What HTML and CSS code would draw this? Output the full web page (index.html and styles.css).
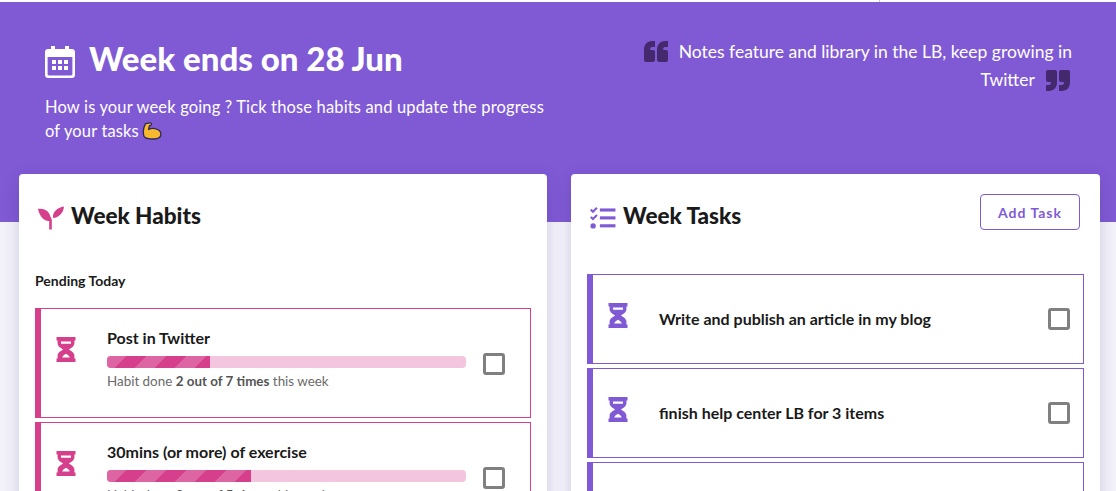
FILE: index.html
```html
<!DOCTYPE html>
<html lang="en">
<head>
<meta charset="utf-8">
<title>Week</title>
<link rel="stylesheet" href="styles.css">
</head>
<body>
<svg class="sprite" width="0" height="0" aria-hidden="true">
  <symbol id="hourglass" viewBox="0 0 20 25">
    <path fill-rule="evenodd" d="M0.5 0H19.5V3.4H18.4V6.5C18.4 9.2 15.2 11 12.8 12.5C15.2 14 18.4 15.8 18.4 18.5V21.6H19.5V25H0.5V21.6H1.6V18.5C1.6 15.8 4.8 14 7.2 12.5C4.8 11 1.6 9.2 1.6 6.5V3.4H0.5ZM5 4.6V6.8H15V4.6ZM10 16.8C8.4 17.8 6.8 18.8 6.2 20.4H13.8C13.2 18.8 11.6 17.8 10 16.8Z"/>
  </symbol>
</svg>
<div class="page">
  <div class="topline"></div>
  <header class="hero">
    <div class="hero-left">
      <h1 class="hero-title">
        <svg class="cal" viewBox="0 0 30 32" aria-hidden="true">
          <path fill="#fff" fill-rule="evenodd" d="M6 0H10V3H20V0H24V3H27C28.7 3 30 4.3 30 6V29C30 30.7 28.7 32 27 32H3C1.3 32 0 30.7 0 29V6C0 4.3 1.3 3 3 3H6ZM2.6 11V28C2.6 28.8 3.2 29.4 4 29.4H26C26.8 29.4 27.4 28.8 27.4 28V11ZM7 14H11V18H7ZM13 14H17V18H13ZM19 14H23V18H19ZM7 20H11V24H7ZM13 20H17V24H13ZM19 20H23V24H19Z"/>
        </svg>
        <span>Week ends on 28 Jun</span>
      </h1>
      <p class="hero-sub">How is your week going ? Tick those habits and update the progress of your tasks
        <svg class="muscle" viewBox="0 0 20 18" aria-hidden="true">
          <path fill="#f9b92e" stroke="#2b2a55" stroke-width="1.3" stroke-linejoin="round" d="M3.5 1.6L8 .8C9.3.7 9.8 2 9.2 3L7.4 3.9 6.6 7.5C8 6.6 10.6 6 13 6.6 16.6 7.4 19 9.5 18.9 12.3 18.8 15.4 15.8 17 12 17 7.5 17 3 16.4 2 14.2 1 11 1.2 6 3.5 1.6Z"/>
        </svg>
      </p>
    </div>
    <blockquote class="quote">
      <svg class="qm" viewBox="0 0 24 22" aria-hidden="true"><path d="M11 1V7H8C7 7 6.2 7.8 6.2 9V10H9C10.2 10 11 10.8 11 12V20C11 21.2 10.2 22 9 22H2C.8 22 0 21.2 0 20V9C0 4.6 3.6 1 8 1ZM24 1V7H21C20 7 19.2 7.8 19.2 9V10H22C23.2 10 24 10.8 24 12V20C24 21.2 23.2 22 22 22H15C13.8 22 13 21.2 13 20V9C13 4.6 16.6 1 21 1Z"/></svg>
      Notes feature and library in the LB, keep growing in Twitter
      <svg class="qm qm-end" viewBox="0 0 24 22" aria-hidden="true"><path d="M11 1V7H8C7 7 6.2 7.8 6.2 9V10H9C10.2 10 11 10.8 11 12V20C11 21.2 10.2 22 9 22H2C.8 22 0 21.2 0 20V9C0 4.6 3.6 1 8 1ZM24 1V7H21C20 7 19.2 7.8 19.2 9V10H22C23.2 10 24 10.8 24 12V20C24 21.2 23.2 22 22 22H15C13.8 22 13 21.2 13 20V9C13 4.6 16.6 1 21 1Z"/></svg>
    </blockquote>
  </header>

  <main class="columns">
    <section class="card">
      <div class="card-head">
        <svg class="head-icon sprout" viewBox="0 0 26 24" aria-hidden="true">
          <path fill="#d53f8c" d="M0 3C6 2 11 5 12.2 10L13.8 13.5V23.5H11.2V15C6 15.5 1.5 10 0 3ZM26 .5C25.5 7 21 11.5 15 12C14.5 6 19 1.5 26 .5Z"/>
        </svg>
        <h2 class="card-title">Week Habits</h2>
      </div>
      <h3 class="group-title">Pending Today</h3>
      <ul class="list">
        <li class="item habit">
          <svg class="glass"><use href="#hourglass"/></svg>
          <div class="body">
            <div class="name">Post in Twitter</div>
            <div class="track"><div class="fill" style="width:28.57%"></div></div>
            <div class="note">Habit done <b>2 out of 7 times</b> this week</div>
          </div>
          <input class="check" type="checkbox" aria-label="Post in Twitter">
        </li>
        <li class="item habit">
          <svg class="glass"><use href="#hourglass"/></svg>
          <div class="body">
            <div class="name">30mins (or more) of exercise</div>
            <div class="track"><div class="fill" style="width:40%"></div></div>
            <div class="note">Habit done <b>2 out of 5 times</b> this week</div>
          </div>
          <input class="check" type="checkbox" aria-label="30mins (or more) of exercise">
        </li>
      </ul>
    </section>

    <section class="card">
      <div class="card-head tasks-head">
        <svg class="head-icon" viewBox="0 0 25 22" aria-hidden="true">
          <g fill="#805ad5">
            <path d="M0 3.6L1.4 2.2 2.8 3.6 6 .4 7.4 1.8 2.8 6.4ZM0 10.6L1.4 9.2 2.8 10.6 6 7.4 7.4 8.8 2.8 13.4Z"/>
            <circle cx="3" cy="18.6" r="2.6"/>
            <rect x="9.5" y="1.8" width="15" height="3"/>
            <rect x="9.5" y="9.4" width="15" height="3"/>
            <rect x="9.5" y="17" width="15" height="3"/>
          </g>
        </svg>
        <h2 class="card-title">Week Tasks</h2>
        <button class="add" type="button">Add Task</button>
      </div>
      <ul class="list">
        <li class="item task">
          <svg class="glass"><use href="#hourglass"/></svg>
          <div class="body"><div class="name">Write and publish an article in my blog</div></div>
          <input class="check" type="checkbox" aria-label="Write and publish an article in my blog">
        </li>
        <li class="item task">
          <svg class="glass"><use href="#hourglass"/></svg>
          <div class="body"><div class="name">finish help center LB for 3 items</div></div>
          <input class="check" type="checkbox" aria-label="finish help center LB for 3 items">
        </li>
        <li class="item task task-long">
          <svg class="glass"><use href="#hourglass"/></svg>
          <div class="body"><div class="name">learn more about your habits</div></div>
          <input class="check" type="checkbox" aria-label="learn more about your habits">
        </li>
      </ul>
    </section>
  </main>
</div>
</body>
</html>
```
FILE: styles.css
```css
* { box-sizing: border-box; }
html, body { margin: 0; height: 491px; overflow: hidden; }
body { background: #f3f2fb; font-family: "Lato", "Open Sans", sans-serif; color: #1a202c; }
.sprite { position: absolute; }
.page { height: 491px; overflow: hidden; }
.topline { height: 2px; background: #fff; }
.topline::after { content: ""; display: block; width: 1px; height: 2px; margin-left: 879px; background: #c8c8c8; }
.hero { height: 220px; background: #805ad5; color: #fff; display: flex; justify-content: space-between; padding: 35px 44px 0 45px; }
.hero-left { width: 510px; }
.hero-title { margin: 0; display: flex; align-items: center; gap: 14px; font-size: 33px; line-height: 42px; font-weight: 900; }
.cal { width: 30px; height: 32px; flex: none; margin-top: 8px; }
.hero-sub { margin: 16px 0 0; font-size: 16.5px; line-height: 24px; letter-spacing: .15px; }
.muscle { width: 20px; height: 18px; vertical-align: -3px; margin-left: -1px; }
.quote { margin: 0; width: 430px; text-align: right; font-size: 17.5px; line-height: 28px; padding-top: 1px; }
.qm { width: 24px; height: 22px; fill: #44296f; vertical-align: -4px; margin-right: 6px; }
.qm-end { margin: 0 2px 0 7px; vertical-align: -6px; transform: rotate(180deg); }
.columns { display: grid; grid-template-columns: 528px 529px; gap: 24px; padding: 0 16px 0 19px; margin-top: -48px; }
.card { background: #fff; border-radius: 4px; padding: 0 16px; height: 400px; box-shadow: 0 4px 16px rgba(40, 30, 90, .18); }
.card-head { display: flex; align-items: center; height: 84px; }
.head-icon { width: 26px; height: 24px; flex: none; margin-left: 3px; margin-right: 7px; margin-top: 4px; }
.card-title { margin: 0; font-size: 22.5px; font-weight: 900; color: #1a1a1a; line-height: 84px; }
.tasks-head { height: 100px; padding-bottom: 16px; }
.add { margin-left: auto; margin-right: 4px; margin-bottom: 8px; width: 100px; height: 36px; background: #fff; border: 1px solid #805ad5; border-radius: 4px; color: #805ad5; font: 700 14px "Lato", sans-serif; letter-spacing: 1px; }
.group-title { margin: 15px 0 19px; font-size: 14px; line-height: 16px; font-weight: 700; color: #1a1a1a; }
.list { list-style: none; margin: 0; padding: 0; display: flex; flex-direction: column; gap: 4px; }
.item { display: flex; border: 1px solid; border-left-width: 6px; background: #fff; }
.habit { height: 110px; border-color: #d53f8c; }
.task { height: 90px; border-color: #805ad5; }
.glass { width: 20px; height: 25px; flex: none; margin: 28px 0 0 15px; }
.habit .glass { fill: #d53f8c; }
.task .glass { fill: #805ad5; }
.body { flex: 1; margin-left: 31px; min-width: 0; }
.name { font-size: 16px; line-height: 20px; font-weight: 700; color: #1a1a1a; }
.habit .body { padding-top: 19px; }
.task .body { padding-top: 34px; }
.task-long .body { padding-top: 24px; }
.track { height: 12px; margin-top: 8px; width: 359px; border-radius: 4px; background: #f3c5df; overflow: hidden; }
.fill { height: 100%; background-color: #d53f8c; background-image: linear-gradient(135deg, rgba(255,255,255,.2) 25%, transparent 25%, transparent 50%, rgba(255,255,255,.2) 50%, rgba(255,255,255,.2) 75%, transparent 75%); background-size: 40px 40px; }
.note { margin-top: 4px; font-size: 13.4px; line-height: 18px; color: #6a6a6a; }
.note b { color: #555; }
.check { appearance: none; width: 22px; height: 22px; margin: 0; flex: none; border: 3px solid #808080; border-radius: 3px; background: #fff; }
.habit .check { margin: 44px 25px 0 0; }
.task .check { margin: 33px 13px 0 0; }
```
